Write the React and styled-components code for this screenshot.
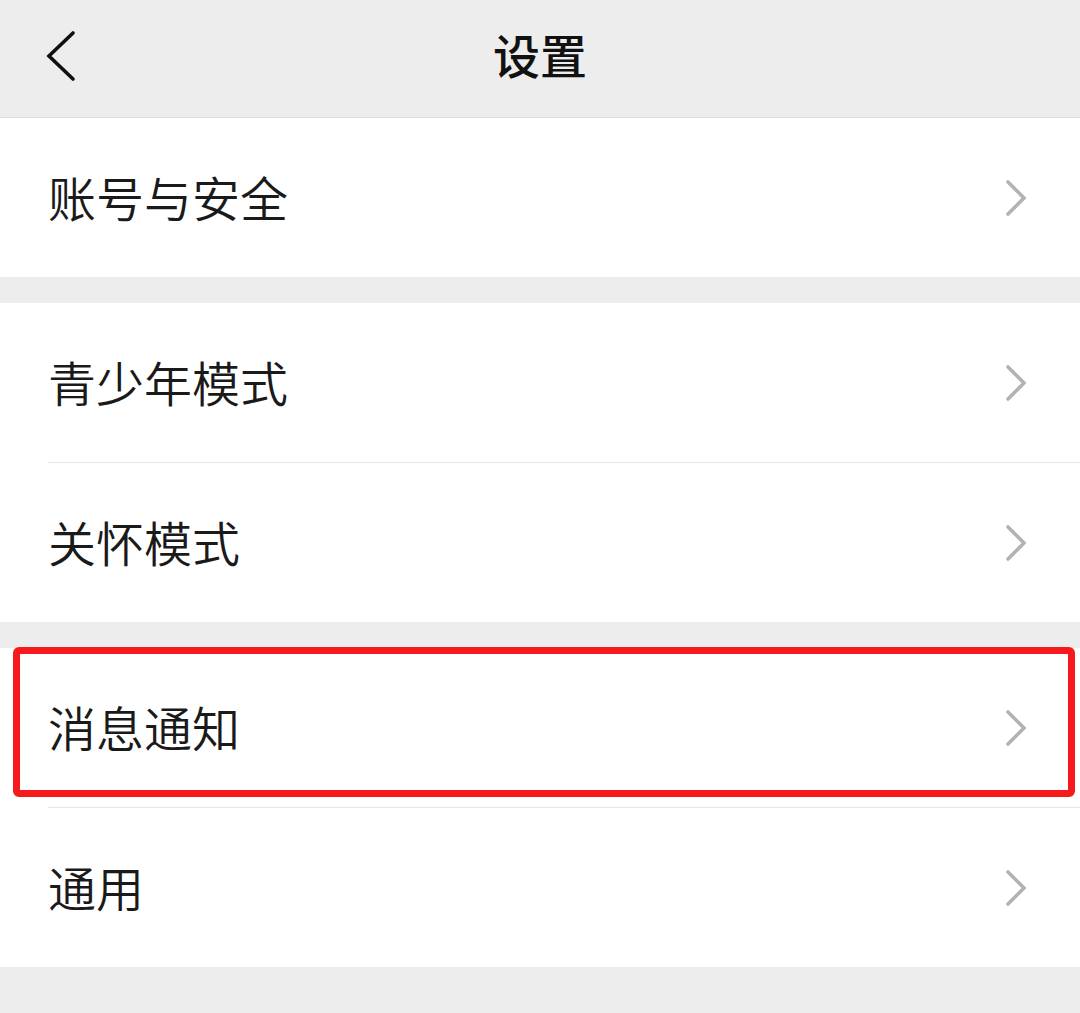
import React from "react";
import styled, { createGlobalStyle } from "styled-components";

const GlobalStyle = createGlobalStyle`
  html, body {
    margin: 0;
    padding: 0;
    background: #ededed;
  }
  body {
    font-family: "Noto Sans CJK SC", "Noto Sans", sans-serif;
  }
`;

const Page = styled.div`
  width: 1080px;
  min-height: 1013px;
  background: #ededed;
  overflow: hidden;
`;

const Header = styled.header`
  height: 117px;
  border-bottom: 1px solid #dcdcdc;
  display: grid;
  grid-template-columns: 120px 1fr 120px;
  align-items: center;
`;

const BackButton = styled.button`
  border: 0;
  background: none;
  padding: 0;
  margin-left: 44px;
  margin-top: -6px;
  width: 36px;
  height: 54px;
  display: flex;
  align-items: center;
  justify-content: center;
  cursor: pointer;
`;

const Title = styled.h1`
  margin: -10px 0 0;
  text-align: center;
  font-size: 47px;
  font-weight: 500;
  color: #111;
  line-height: 1;
`;

const Group = styled.section`
  background: #fff;
  margin-top: ${(p) => p.$gap}px;
`;

const Row = styled.div`
  position: relative;
  height: 159px;
  display: flex;
  align-items: center;
  justify-content: space-between;
  padding: 0 52px 0 48px;
  cursor: pointer;

  & + & {
    border-top: 1px solid transparent;
  }
  & + &::before {
    content: "";
    position: absolute;
    top: -1px;
    left: 48px;
    right: 0;
    height: 1px;
    background: #e6e6e6;
  }
`;

const Label = styled.span`
  font-size: 48px;
  font-weight: 350;
  color: #1a1a1a;
  line-height: 1;
  margin-top: -3px;
`;

const Highlight = styled.div`
  position: absolute;
  top: -1px;
  left: 13px;
  right: 5px;
  bottom: 10px;
  border: 7px solid #f71a1c;
  border-radius: 6px;
  pointer-events: none;
`;

const BackIcon = () => (
  <svg width="36" height="54" viewBox="0 0 36 54" fill="none">
    <polyline
      points="29,4 5,27 29,50"
      stroke="#111"
      strokeWidth="3.6"
      strokeLinecap="round"
      strokeLinejoin="miter"
    />
  </svg>
);

const ChevronIcon = () => (
  <svg width="24" height="38" viewBox="0 0 24 38" fill="none">
    <polyline
      points="4,3 20,19 4,35"
      stroke="#b3b3b3"
      strokeWidth="3.6"
      strokeLinecap="round"
      strokeLinejoin="miter"
    />
  </svg>
);

const groups = [
  { gap: 0, items: ["账号与安全"] },
  { gap: 26, items: ["青少年模式", "关怀模式"] },
  { gap: 26, items: ["消息通知", "通用"] },
];

export default function App() {
  return (
    <Page>
      <GlobalStyle />
      <Header>
        <BackButton aria-label="返回">
          <BackIcon />
        </BackButton>
        <Title>设置</Title>
        <div />
      </Header>
      {groups.map((group, i) => (
        <Group key={i} $gap={group.gap}>
          {group.items.map((item) => (
            <Row key={item}>
              <Label>{item}</Label>
              <ChevronIcon />
              {item === "消息通知" && <Highlight />}
            </Row>
          ))}
        </Group>
      ))}
    </Page>
  );
}
